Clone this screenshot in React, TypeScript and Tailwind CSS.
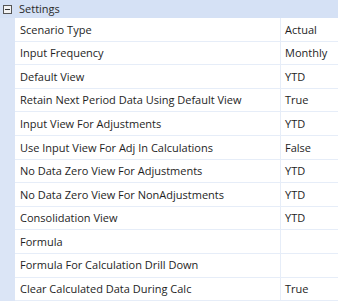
const rows: [string, string][] = [
  ["Scenario Type", "Actual"],
  ["Input Frequency", "Monthly"],
  ["Default View", "YTD"],
  ["Retain Next Period Data Using Default View", "True"],
  ["Input View For Adjustments", "YTD"],
  ["Use Input View For Adj In Calculations", "False"],
  ["No Data Zero View For Adjustments", "YTD"],
  ["No Data Zero View For NonAdjustments", "YTD"],
  ["Consolidation View", "YTD"],
  ["Formula", ""],
  ["Formula For Calculation Drill Down", ""],
  ["Clear Calculated Data During Calc", "True"],
];

const App = () => {
  return (
    <div
      className="w-[338px] h-[303px] overflow-hidden bg-white text-[11px] text-[#1e1e1e]"
      style={{ fontFamily: '"Open Sans", "Noto Sans", sans-serif' }}
    >
      <div className="h-[18px] flex items-center bg-[#d5e1f5]">
        <div className="w-[15px] flex justify-center">
          <div className="w-[9px] h-[9px] border border-[#555] bg-[#f2f2f2] flex items-center justify-center">
            <div className="w-[5px] h-px bg-[#333]"></div>
          </div>
        </div>
        <span className="ml-[4px] text-[#2a2a2a]">Settings</span>
      </div>
      <div className="flex">
        <div className="w-[15px] bg-[#dbe5f6] shrink-0"></div>
        <div className="flex-1">
          {rows.map(([label, value]) => (
            <div
              key={label}
              className="h-[23.6px] flex border-b border-[#e6edf8]"
            >
              <div className="w-[266px] flex items-center pl-[5px] pt-px whitespace-nowrap overflow-hidden border-r border-[#e6edf8]">
                {label}
              </div>
              <div className="flex-1 flex items-center pl-[4px] pt-px whitespace-nowrap">
                {value}
              </div>
            </div>
          ))}
        </div>
      </div>
    </div>
  );
};

export default App;
